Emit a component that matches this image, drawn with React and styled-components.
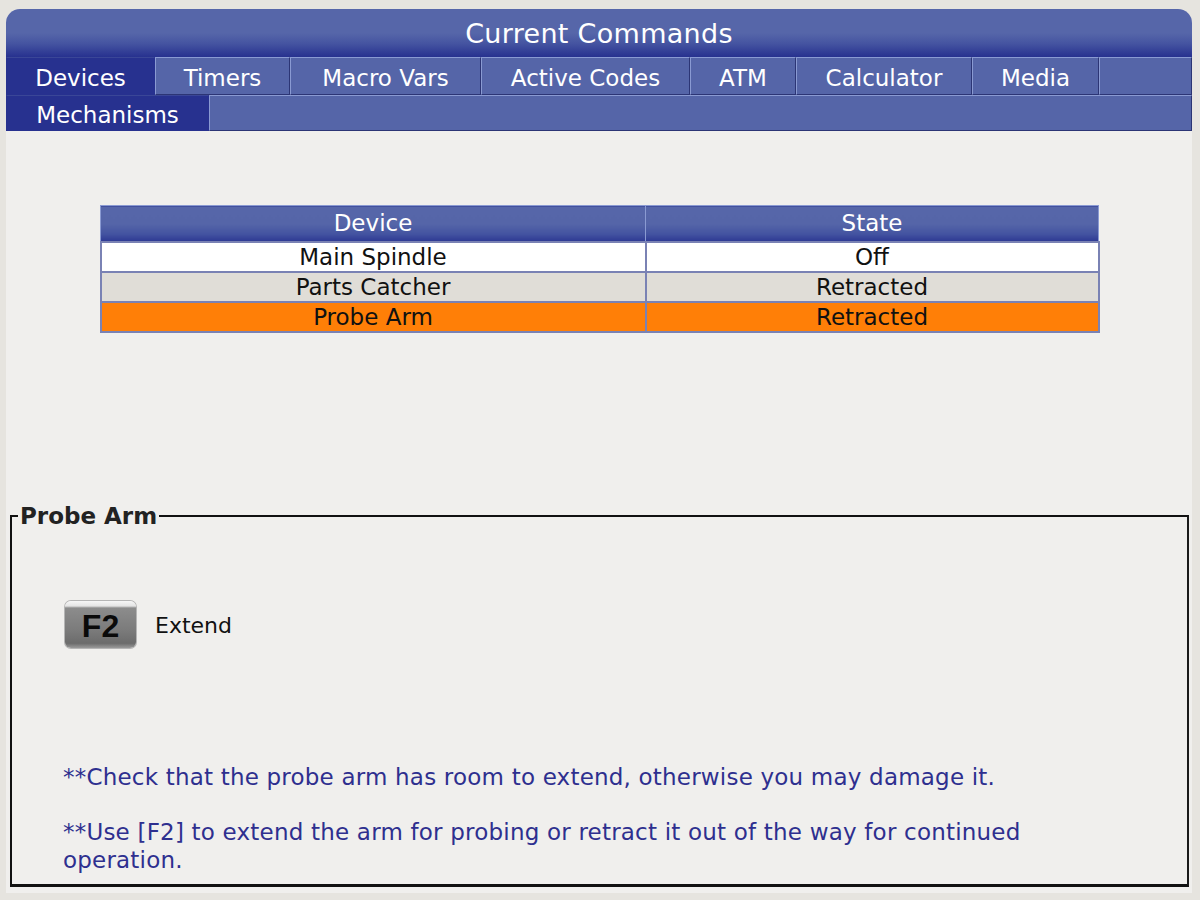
import React from "react";
import styled, { createGlobalStyle } from "styled-components";

const Global = createGlobalStyle`
  html, body { margin: 0; padding: 0; background: #e6e4df; }
  body { font-family: "DejaVu Sans", "Liberation Sans", sans-serif; }
  * { box-sizing: border-box; }
`;

const Screen = styled.div`
  width: 1200px;
  height: 900px;
  padding: 9px 8px 7px 6px;
  display: flex;
`;

const Panel = styled.div`
  flex: 1;
  display: flex;
  flex-direction: column;
  background: #f0efed;
  border-radius: 14px 14px 0 0;
  overflow: hidden;
`;

const TitleBar = styled.div`
  height: 48px;
  display: flex;
  align-items: center;
  justify-content: center;
  color: #fff;
  font-size: 27px;
  letter-spacing: 0.3px;
  padding-top: 1px;
  background: linear-gradient(to bottom, #5666a9 0%, #5666a9 50%, #4554a1 72%, #27318f 100%);
`;

const TabRow = styled.div`
  display: flex;
  height: ${(p) => p.$h}px;
  background: #27318f;
`;

const Tab = styled.div`
  flex: 0 0 ${(p) => (p.$w ? `${p.$w}px` : "auto")};
  display: flex;
  align-items: center;
  justify-content: center;
  padding: 3px 0 0;
  font-size: 23px;
  color: #fff;
  white-space: nowrap;
  background: ${(p) => (p.$active ? "#27318f" : "#5565a8")};
  border-top: 1px solid ${(p) => (p.$active ? "#3a4697" : "#8a9ad2")};
  border-left: 1px solid ${(p) => (p.$active ? "#27318f" : "#8a9ad2")};
  border-right: 1px solid ${(p) => (p.$active ? "#27318f" : "#2c3575")};
  border-bottom: 1px solid ${(p) => (p.$active ? "#27318f" : "#2c3575")};
`;

const Filler = styled(Tab)`
  flex: 1;
`;

const Content = styled.div`
  flex: 1;
  display: flex;
  flex-direction: column;
  padding: 74px 3px 6px 4px;
  min-height: 0;
`;

const Table = styled.table`
  width: 998px;
  margin: 0 auto;
  border-collapse: collapse;
  font-size: 23px;
  table-layout: fixed;
`;

const HeadCell = styled.th`
  height: 36px;
  padding: 0;
  font-weight: normal;
  color: #fff;
  text-align: center;
  background: linear-gradient(to bottom, #5666a9 0%, #5565a8 50%, #4252a0 80%, #2d3893 100%);
  border: 1px solid #8a9ad2;
  border-bottom: 1px solid #2d3893;
`;

const rowBg = { white: "#ffffff", gray: "#e0ddd7", orange: "#ff7f07" };

const Cell = styled.td`
  height: 30px;
  padding: 0;
  text-align: center;
  color: #111;
  line-height: 26px;
  background: ${(p) => rowBg[p.$tone]};
  border: 2px solid #7a82b4;
  border-top-color: ${(p) => (p.$first ? "#7a82b4" : "#7a7a7a")};
`;

const Fieldset = styled.fieldset`
  margin: 170px 0 0 0;
  flex: 1;
  min-height: 0;
  display: flex;
  flex-direction: column;
  padding: 0 68px 10px 51px;
  border: 2px solid #111;
  border-bottom-width: 3px;
  border-right-color: #1a1a1a;
`;

const Legend = styled.legend`
  margin-left: -45px;
  padding: 0 2px;
  font-size: 23px;
  line-height: 26px;
  font-weight: bold;
  color: #222;
`;

const KeyRow = styled.div`
  display: flex;
  align-items: center;
  gap: 19px;
  margin-top: 72px;
  padding-left: 2px;
`;

const Key = styled.div`
  width: 71px;
  height: 47px;
  border-radius: 6px;
  display: flex;
  align-items: center;
  justify-content: center;
  font-family: "Liberation Sans", Arial, sans-serif;
  font-weight: bold;
  font-size: 32px;
  color: #0a0a0a;
  padding-top: 5px;
  background: linear-gradient(to bottom, #f6f6f6 0px, #e4e4e4 5px, #8c8c8c 7px, #7c7c7c 60%, #6c6c6c 90%, #9a9a9a 100%);
  box-shadow: 0 0 0 1px #b5b5b5;
`;

const KeyLabel = styled.span`
  font-size: 22px;
  color: #111;
  padding-top: 2px;
`;

const Notes = styled.div`
  margin-top: auto;
  display: flex;
  flex-direction: column;
  gap: 27px;
  color: #2e2f8f;
  font-size: 23px;
  letter-spacing: 0.2px;
  line-height: 28px;
`;

const Note = styled.p`
  margin: 0;
`;

const row1 = [
  { label: "Devices", w: 149 },
  { label: "Timers", w: 135 },
  { label: "Macro Vars", w: 191 },
  { label: "Active Codes", w: 209 },
  { label: "ATM", w: 106 },
  { label: "Calculator", w: 176 },
  { label: "Media", w: 127 },
];

const rows = [
  { device: "Main Spindle", state: "Off", tone: "white" },
  { device: "Parts Catcher", state: "Retracted", tone: "gray" },
  { device: "Probe Arm", state: "Retracted", tone: "orange" },
];

export default function App() {
  return (
    <>
      <Global />
      <Screen>
        <Panel>
          <TitleBar>Current Commands</TitleBar>
          <TabRow $h={38}>
            {row1.map((t, i) => (
              <Tab key={t.label} $w={t.w} $active={i === 0}>
                {t.label}
              </Tab>
            ))}
            <Filler />
          </TabRow>
          <TabRow $h={36}>
            <Tab $w={203} $active>Mechanisms</Tab>
            <Filler />
          </TabRow>
          <Content>
            <Table>
              <colgroup>
                <col style={{ width: "545px" }} />
                <col style={{ width: "453px" }} />
              </colgroup>
              <thead>
                <tr>
                  <HeadCell>Device</HeadCell>
                  <HeadCell>State</HeadCell>
                </tr>
              </thead>
              <tbody>
                {rows.map((r, i) => (
                  <tr key={r.device}>
                    <Cell $tone={r.tone} $first={i === 0}>{r.device}</Cell>
                    <Cell $tone={r.tone} $first={i === 0}>{r.state}</Cell>
                  </tr>
                ))}
              </tbody>
            </Table>
            <Fieldset>
              <Legend>Probe Arm</Legend>
              <KeyRow>
                <Key>F2</Key>
                <KeyLabel>Extend</KeyLabel>
              </KeyRow>
              <Notes>
                <Note>**Check that the probe arm has room to extend, otherwise you may damage it.</Note>
                <Note>
                  **Use [F2] to extend the arm for probing or retract it out of the way for continued operation.
                </Note>
              </Notes>
            </Fieldset>
          </Content>
        </Panel>
      </Screen>
    </>
  );
}
